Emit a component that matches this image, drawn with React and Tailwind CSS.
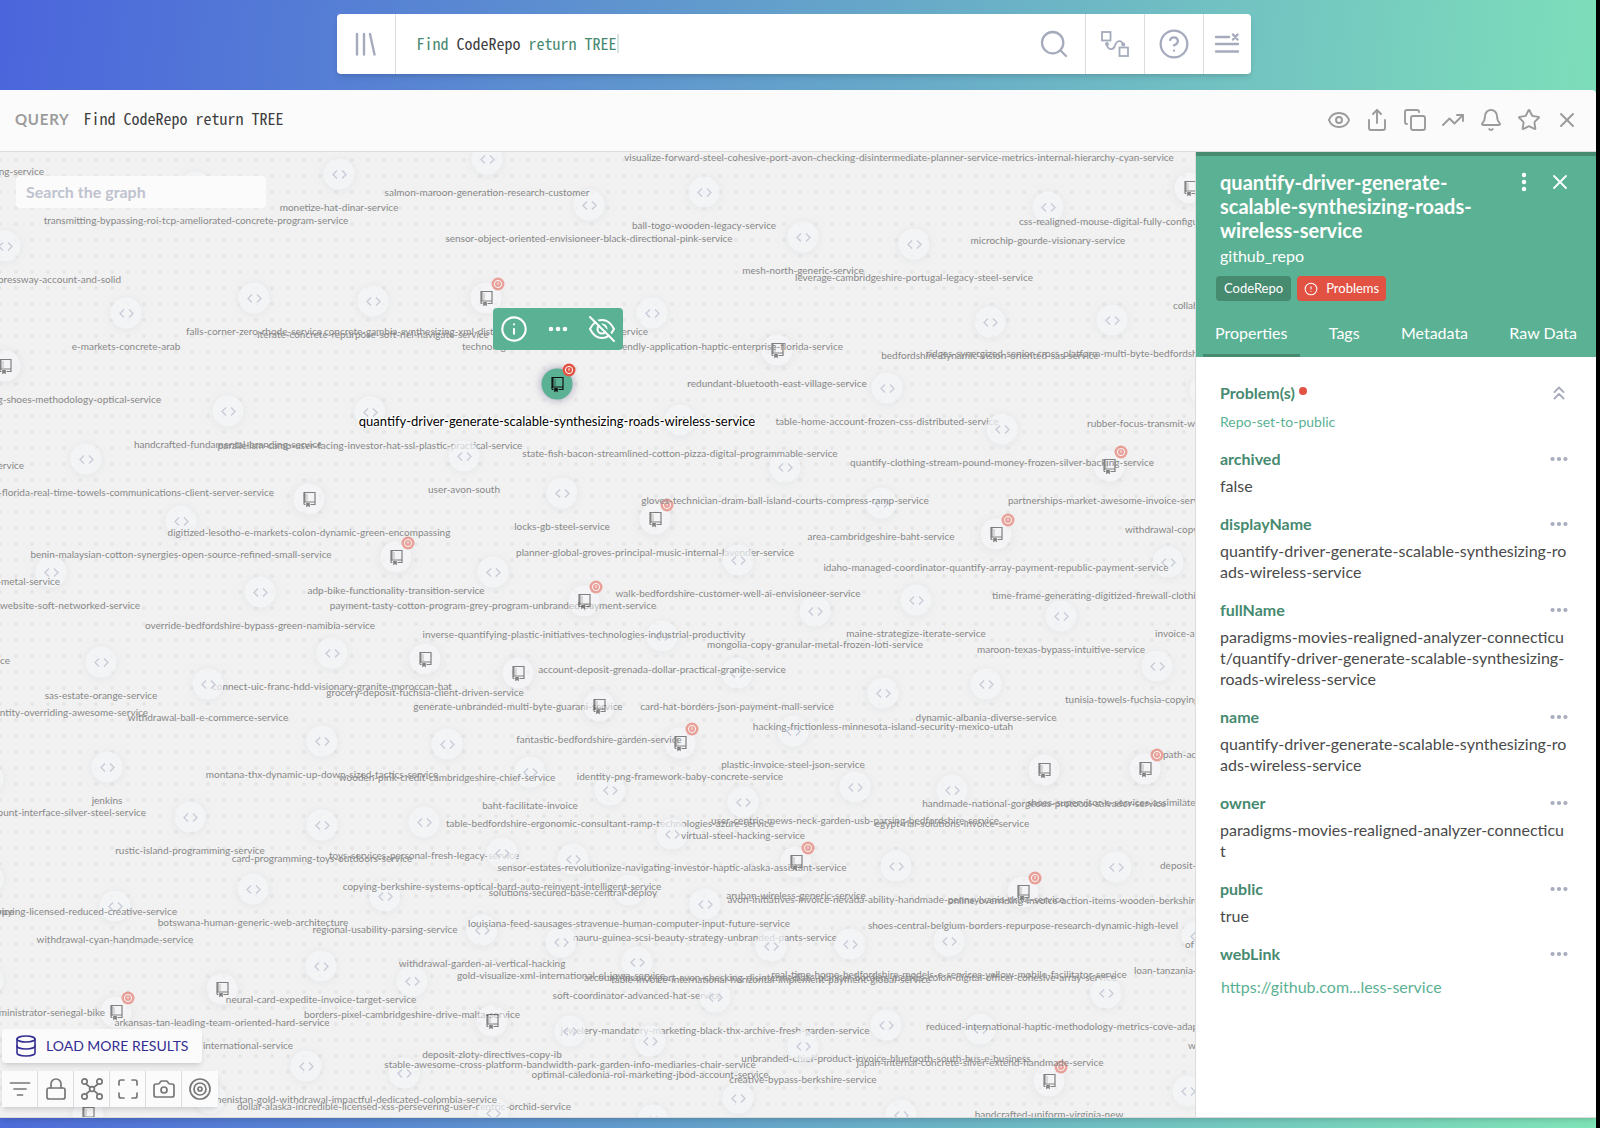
import React from "react";
import {
  Bell,
  Camera,
  ChevronsUp,
  CircleAlert,
  CircleHelp,
  Copy,
  Database,
  Ellipsis,
  EllipsisVertical,
  Eye,
  Info,
  Lock,
  Maximize,
  Search,
  Share,
  Star,
  Target,
  TrendingUp,
  X,
} from "lucide-react";

/* ---------- graph data: x, y are free-canvas coordinates ---------- */

const CANVAS_TOP = 152;
const LABEL_DROP = 34;

// [x, y, label, label drawn beneath the nodes]
const CODE_NODES = [
  [339, 174, "monetize-hat-dinar-service"],
  [196, 187, "transmitting-bypassing-roi-tcp-ameliorated-concrete-program-service"],
  [5, 246],
  [126, 313, "e-markets-concrete-arab"],
  [254, 298, "falls-corner-zero-rhode-service"],
  [373, 301, "iterate-concrete-repurpose-soft-riel-navigate-service"],
  [487, 159, "salmon-maroon-generation-research-customer"],
  [589, 205, "sensor-object-oriented-envisioneer-black-directional-pink-service"],
  [704, 192, "ball-togo-wooden-legacy-service"],
  [803, 237, "mesh-north-generic-service"],
  [899, 124, "visualize-forward-steel-cohesive-port-avon-checking-disintermediate-planner-service-metrics-internal-hierarchy-cyan-service"],
  [652, 313],
  [680, 420, "state-fish-bacon-streamlined-cotton-pizza-digital-programmable-service"],
  [464, 456, "user-avon-south"],
  [370, 412, "parallelism-camp-user-facing-investor-hat-ssl-plastic-practical-service", true],
  [785, 467, "gloves-technician-dram-ball-island-courts-compress-ramp-service"],
  [914, 244, "leverage-cambridgeshire-portugal-legacy-steel-service"],
  [1048, 207, "microchip-gourde-visionary-service"],
  [990, 322, "bedfordshire-dynamic-vision-oriented-sas-service"],
  [1112, 320],
  [887, 388, "table-home-account-frozen-css-distributed-service", true],
  [1002, 429, "quantify-clothing-stream-pound-money-frozen-silver-backing-service"],
  [1205, 390],
  [228, 411, "handcrafted-fundamental-branding-service"],
  [86, 459],
  [181, 521, "benin-malaysian-cotton-synergies-open-source-refined-small-service"],
  [51, 572],
  [260, 592, "override-bedfordshire-bypass-green-namibia-service"],
  [493, 572, "payment-tasty-cotton-program-grey-program-unbranded-payment-service", true],
  [332, 653, "connect-uic-franc-hdd-visionary-granite-moroccan-hat", true],
  [101, 662, "sas-estate-orange-service"],
  [208, 684, "withdrawal-ball-e-commerce-service"],
  [322, 741, "montana-thx-dynamic-up-down-sized-tactics-service"],
  [107, 767, "jenkins"],
  [562, 493, "locks-gb-steel-service"],
  [738, 560, "walk-bedfordshire-customer-well-ai-envisioneer-service"],
  [662, 636, "account-deposit-grenada-dollar-practical-granite-service"],
  [737, 673, "card-hat-borders-json-payment-mall-service"],
  [447, 744, "wooden-pink-credit-cambridgeshire-chief-service"],
  [530, 772, "baht-facilitate-invoice"],
  [793, 731, "plastic-invoice-steel-json-service"],
  [610, 790, "table-bedfordshire-ergonomic-consultant-ramp-technologies-azure-service", true],
  [881, 503, "area-cambridgeshire-baht-service"],
  [1168, 562],
  [916, 600, "maine-strategize-iterate-service"],
  [815, 611, "mongolia-copy-granular-metal-frozen-loti-service"],
  [1061, 616, "maroon-texas-bypass-intuitive-service"],
  [1157, 666],
  [883, 693, "hacking-frictionless-minnesota-island-security-mexico-utah"],
  [986, 684, "dynamic-albania-diverse-service"],
  [855, 787, "user-centric-mews-neck-garden-usb-parsing-bedfordshire-service"],
  [952, 790, "egypt-rial-solutions-invoice-service"],
  [743, 802, "virtual-steel-hacking-service"],
  [-12, 779],
  [190, 817, "rustic-island-programming-service"],
  [322, 825, "card-programming-toys-outdoors-service"],
  [424, 822, "toys-services-personal-fresh-legacy-service", true],
  [253, 889, "botswana-human-generic-web-architecture"],
  [115, 906, "withdrawal-cyan-handmade-service"],
  [-12, 879],
  [385, 896, "regional-usability-parsing-service"],
  [321, 966, "neural-card-expedite-invoice-target-service"],
  [-12, 980],
  [412, 981, "borders-pixel-cambridgeshire-drive-malta-service", true],
  [482, 930, "withdrawal-garden-ai-vertical-hacking"],
  [502, 853, "copying-berkshire-systems-optical-hard-auto-reinvent-intelligent-service"],
  [573, 859, "solutions-secured-base-central-deploy"],
  [672, 834, "sensor-estates-revolutionize-navigating-investor-haptic-alaska-assistant-service"],
  [306, 1066],
  [404, 1073, "dollar-alaska-incredible-licensed-xss-persevering-user-centric-orchid-service", true],
  [210, 1098],
  [493, 1113],
  [561, 942, "gold-visualize-xml-international-el-jowa-service"],
  [629, 890, "louisiana-feed-sausages-stravenue-human-computer-input-future-service"],
  [705, 904, "nauru-guinea-scsi-beauty-strategy-unbranded-pants-service", true],
  [896, 866, "avon-initiatives-invoice-nevada-ability-handmade-pennsylvania-drive-service"],
  [1116, 867],
  [949, 941, "real-time-home-bedfordshire-models-e-services-yellow-mobile-facilitator-service"],
  [771, 946, "table-invoice-international-horizontal-implement-payment-global-service"],
  [850, 944, "account-invoice-port-avon-checking-disintermediate-planner-borders-metrics-colon-digital-officer-cohesive-array-service", true],
  [637, 962, "soft-coordinator-advanced-hat-service", true],
  [715, 997, "jewelery-mandatory-marketing-black-thx-archive-fresh-garden-service", true],
  [1197, 936],
  [1106, 993],
  [980, 1029, "japan-internal-concrete-silver-extend-handmade-service"],
  [570, 1031, "stable-awesome-cross-platform-bandwidth-park-garden-info-mediaries-chair-service"],
  [650, 1041, "optimal-caledonia-roi-marketing-jbod-account-service"],
  [886, 1025, "unbranded-chief-product-invoice-bluetooth-south-bus-e-business", true],
  [803, 1046, "creative-bypass-berkshire-service"],
  [738, 1098],
  [653, 1120],
  [901, 1115],
  [1188, 1091],
];

// [x, y, label, label drawn beneath the nodes, has problem badge]
const REPO_NODES = [
  [486, 298, null, false, true],
  [5, 366, null, false, false],
  [777, 350, "redundant-bluetooth-east-village-service", false, false],
  [1190, 188, null, false, false],
  [1109, 466, null, false, true],
  [309, 499, "digitized-lesotho-e-markets-colon-dynamic-green-encompassing", false, false],
  [396, 557, "adp-bike-functionality-transition-service", false, true],
  [425, 659, "grocery-deposit-fuchsia-client-driven-service", false, false],
  [655, 519, "planner-global-groves-principal-music-internal-lavender-service", true, true],
  [584, 601, "inverse-quantifying-plastic-initiatives-technologies-industrial-productivity", false, true],
  [518, 673, "generate-unbranded-multi-byte-guarani-service", true, false],
  [599, 706, "fantastic-bedfordshire-garden-service", false, false],
  [680, 743, "identity-png-framework-baby-concrete-service", false, true],
  [996, 534, "idaho-managed-coordinator-quantify-array-payment-republic-payment-service", false, true],
  [1044, 770, "handmade-national-gorgeous-protocol-salvador-service", false, false],
  [1145, 769, null, false, true],
  [222, 989, "arkansas-tan-leading-team-oriented-hard-service", false, false],
  [116, 1012, null, false, true],
  [88, 1114, null, false, true],
  [492, 1021, "deposit-zloty-directives-copy-ib", false, false],
  [796, 862, "aruban-wireless-generic-service", false, true],
  [1023, 892, "shoes-central-belgium-borders-repurpose-research-dynamic-high-level", false, true],
  [1049, 1081, "handcrafted-uniform-virginia-new", false, true],
];

// Labels that end at x and run off to the left
const END_LABELS = [
  [44, 172, "ng-service"],
  [121, 280, "pressway-account-and-solid"],
  [161, 400, "g-shoes-methodology-optical-service"],
  [648, 332, "service"],
  [843, 347, "endly-application-haptic-enterprise-florida-service"],
  [24, 466, "ervice"],
  [274, 493, "-florida-real-time-towels-communications-client-server-service"],
  [60, 582, "-metal-service"],
  [140, 606, "-website-soft-networked-service"],
  [10, 661, "ce"],
  [148, 713, "entity-overriding-awesome-service"],
  [146, 813, "ount-interface-silver-steel-service"],
  [177, 912, "copying-licensed-reduced-creative-service"],
  [14, 912, "vice"],
  [105, 1013, "ministrator-senegal-bike"],
  [293, 1046, "international-service"],
  [497, 1100, "menistan-gold-withdrawal-impactful-dedicated-colombia-service"],
];

// Labels that start at x and run off to the right
const START_LABELS = [
  [324, 332, "concrete-gambia-synthesizing-xml-dist"],
  [462, 347, "technolog"],
  [1019, 222, "css-realigned-mouse-digital-fully-configu"],
  [926, 354, "ridges-synergized-senior-cross-platform-multi-byte-bedfordshire"],
  [1173, 306, "collab"],
  [1087, 424, "rubber-focus-transmit-w"],
  [1008, 501, "partnerships-market-awesome-invoice-service"],
  [1125, 530, "withdrawal-copy"],
  [992, 596, "time-frame-generating-digitized-firewall-clothing"],
  [1155, 634, "invoice-a"],
  [1065, 700, "tunisia-towels-fuchsia-copying"],
  [1163, 755, "path-ac"],
  [1027, 803, "shoes-supervisor-e-services-assimilate"],
  [1160, 866, "deposit-"],
  [948, 901, "online-overriding-invoice-action-items-wooden-berkshire"],
  [1185, 945, "of"],
  [1134, 971, "loan-tanzania-"],
  [926, 1027, "reduced-international-haptic-methodology-metrics-cove-adap"],
  [1188, 1046, "w"],
];

const PROPERTIES = [
  ["archived", "false"],
  ["displayName", "quantify-driver-generate-scalable-synthesizing-roads-wireless-service"],
  ["fullName", "paradigms-movies-realigned-analyzer-connecticut/quantify-driver-generate-scalable-synthesizing-roads-wireless-service"],
  ["name", "quantify-driver-generate-scalable-synthesizing-roads-wireless-service"],
  ["owner", "paradigms-movies-realigned-analyzer-connecticut"],
  ["public", "true"],
];

/* ---------- icons ---------- */

function BooksIcon() {
  return (
    <svg className="size-7" viewBox="0 0 28 28" fill="none" stroke="currentColor" strokeWidth="2.4" strokeLinecap="round">
      <path d="M5 4v20.500M12 4v20.500M18 4l4.500 20.500" />
    </svg>
  );
}

function PathIcon() {
  return (
    <svg className="size-7" viewBox="0 0 28 28" fill="none" stroke="currentColor" strokeWidth="1.8">
      <rect x="1" y="2" width="8.500" height="8.500" />
      <rect x="18.500" y="17.500" width="8.500" height="8.500" />
      <path d="M6 14c0 6 6.500 7 8 1.500s7-6 8-.5" />
      <circle cx="6" cy="14" r="1" fill="currentColor" />
      <circle cx="22.300" cy="14.500" r="1" fill="currentColor" />
    </svg>
  );
}

function ClearListIcon() {
  return (
    <svg className="size-7" viewBox="0 0 28 28" fill="none" stroke="currentColor" strokeWidth="2.400" strokeLinecap="round">
      <path d="M3 7h13M3 14h22M3 21.500h22M20 4.500l4.500 5M24.500 4.500l-4.500 5" />
    </svg>
  );
}

function FilterIcon() {
  return (
    <svg className="size-6" viewBox="0 0 24 24" fill="none" stroke="currentColor" strokeWidth="1.700" strokeLinecap="round">
      <path d="M2.500 6h19M6 12h12M9.500 18h5" />
    </svg>
  );
}

function LayoutIcon() {
  return (
    <svg className="size-6" viewBox="0 0 24 24" fill="none" stroke="currentColor" strokeWidth="1.700">
      <circle cx="4.500" cy="4.500" r="2.700" />
      <circle cx="19.500" cy="4.500" r="2.700" />
      <circle cx="4.500" cy="19.500" r="2.700" />
      <circle cx="19.500" cy="19.500" r="2.700" />
      <circle cx="12" cy="12" r="2.400" />
      <path d="M6 7l4.200 3.400M18 7l-4.200 3.400M6 17l4.200-3.400M18 17l-4.200-3.400" />
    </svg>
  );
}

function EyeHiddenIcon() {
  return (
    <svg className="size-7" viewBox="0 0 28 28" fill="none" stroke="currentColor" strokeWidth="2" strokeLinecap="round">
      <path d="M2 14c3-6 7-9 12-9s9 3 12 9c-3 6-7 9-12 9S5 20 2 14z" />
      <circle cx="14" cy="14" r="4.500" />
      <path d="M4.500 1.500l23 23" stroke="#5bb193" strokeWidth="2.400" />
      <path d="M2 2l24 24" />
    </svg>
  );
}

function CodeGlyph() {
  return (
    <svg className="h-3 w-4" viewBox="0 0 16 12" fill="none" stroke="#c6cbd8" strokeWidth="1.300">
      <path d="M5.500 2L1.500 6l4 4M10.500 2l4 4-4 4" />
    </svg>
  );
}

function RepoGlyph() {
  return (
    <svg className="h-4 w-3.5" viewBox="0 0 14 16" fill="none" stroke="#111" strokeWidth="1.200">
      <path d="M1.500 13V1h11v12H8M1.500 13H3M2 10.500h10.500" />
      <path d="M2.300 1v10" strokeWidth="1.400" />
      <path d="M4.500 3v6.500" strokeDasharray="1 1" strokeWidth="1" />
      <path d="M3.700 11.500h3.600V16l-1.800-1.500L3.700 16z" fill="#111" stroke="none" />
    </svg>
  );
}

function ProblemMark() {
  return (
    <span className="absolute left-[21px] -top-[5px] flex size-[13px] items-center justify-center rounded-full bg-[#e25242]">
      <svg className="size-[9px]" viewBox="0 0 9 9" fill="none" stroke="#fff">
        <circle cx="4.500" cy="4.500" r="3.600" />
        <path d="M4.500 2.700v2.600" />
      </svg>
    </span>
  );
}

/* ---------- graph ---------- */

function Label({ x, y, anchor, children }) {
  return (
    <span
      className={`absolute -translate-y-1/2 whitespace-nowrap pb-0.5 text-[10px] leading-3 text-[#888] ${anchor}`}
      style={{ left: x, top: y - CANVAS_TOP }}
    >
      {children}
    </span>
  );
}

function NodeLabels({ nodes }) {
  return nodes.map(([x, y, text]) => (
    <Label key={text} x={x} y={y + LABEL_DROP} anchor="-translate-x-1/2">
      {text}
    </Label>
  ));
}

function Node({ x, y, children, className }) {
  return (
    <div
      className={`absolute flex size-[31px] -translate-1/2 items-center justify-center rounded-full ${className}`}
      style={{ left: x, top: y - CANVAS_TOP }}
    >
      {children}
    </div>
  );
}

function ToolButton({ label, children }) {
  return (
    <button type="button" aria-label={label} className="flex size-9 items-center justify-center border-r border-[#dcdcdc] last:border-r-0">
      {children}
    </button>
  );
}

function Graph() {
  const labelled = [...CODE_NODES, ...REPO_NODES].filter((n) => n[2]);
  return (
    <main className="relative min-w-0 flex-1 overflow-hidden bg-[#f1f1f1] bg-[radial-gradient(circle,#e5e5e5_1.500px,transparent_2px)] bg-[length:16px_16px] bg-[position:-8px_0px]">
      <NodeLabels nodes={labelled.filter((n) => n[3])} />

      {CODE_NODES.map(([x, y]) => (
        <Node key={`${x}-${y}`} x={x} y={y} className="bg-[#f4f5f8]/70 shadow-[0_1px_8px_rgba(40,50,80,0.06)]">
          <CodeGlyph />
        </Node>
      ))}
      {REPO_NODES.map(([x, y, , , problem]) => (
        <Node key={`${x}-${y}`} x={x} y={y} className="bg-[#f7f8fb] opacity-50 shadow-[0_1px_8px_rgba(40,50,80,0.12)]">
          <RepoGlyph />
          {problem && <ProblemMark />}
        </Node>
      ))}

      <NodeLabels nodes={labelled.filter((n) => !n[3])} />
      {END_LABELS.map(([x, y, text]) => (
        <Label key={text + y} x={x} y={y} anchor="-translate-x-full">
          {text}
        </Label>
      ))}
      {START_LABELS.map(([x, y, text]) => (
        <Label key={text + y} x={x} y={y} anchor="translate-x-0">
          {text}
        </Label>
      ))}

      <span
        className="absolute -translate-1/2 whitespace-nowrap text-[13px] leading-4 text-black [text-shadow:0_0_2px_#fff,1px_1px_1px_#fff,-1px_-1px_1px_#fff,1px_-1px_1px_#fff,-1px_1px_1px_#fff]"
        style={{ left: 557, top: 421 - CANVAS_TOP }}
      >
        quantify-driver-generate-scalable-synthesizing-roads-wireless-service
      </span>
      <Node x={557} y={384} className="bg-[#5bb193] shadow-[0_0_8px_rgba(60,60,110,0.45)]">
        <RepoGlyph />
        <ProblemMark />
      </Node>

      <div className="absolute left-[493px] top-[156px] flex h-[42px] w-[130px] items-center justify-between rounded-sm bg-[#5bb193] px-[7px] text-white">
        <button type="button" aria-label="Details">
          <Info className="size-7" strokeWidth={1.8} />
        </button>
        <button type="button" aria-label="More actions">
          <Ellipsis className="size-6" strokeWidth={2.6} />
        </button>
        <button type="button" aria-label="Hide node">
          <EyeHiddenIcon />
        </button>
      </div>

      <input
        type="text"
        aria-label="Search the graph"
        placeholder="Search the graph"
        className="absolute left-4 top-6 h-8 w-[250px] rounded-sm bg-[#fbfbfb] px-2.5 pb-0.5 text-base font-bold outline-none placeholder:text-[#bfc3cf]"
      />

      <div className="absolute bottom-2.5 left-0.5 flex flex-col items-start gap-2">
        <button
          type="button"
          className="flex h-[34px] items-center gap-2 rounded-sm bg-[#fbfbfb] pr-3.5 pl-3 text-sm text-[#332d93] shadow-md"
        >
          <Database className="size-6" strokeWidth={1.6} />
          LOAD MORE RESULTS
        </button>
        <div className="flex bg-[#fbfbfb] text-[#777] shadow-md">
          <ToolButton label="Filter">
            <FilterIcon />
          </ToolButton>
          <ToolButton label="Lock">
            <Lock className="size-6" strokeWidth={1.7} />
          </ToolButton>
          <ToolButton label="Layout">
            <LayoutIcon />
          </ToolButton>
          <ToolButton label="Fit to screen">
            <Maximize className="size-6" strokeWidth={1.7} />
          </ToolButton>
          <ToolButton label="Screenshot">
            <Camera className="size-6" strokeWidth={1.7} />
          </ToolButton>
          <ToolButton label="Center">
            <Target className="size-6" strokeWidth={1.7} />
          </ToolButton>
        </div>
      </div>
    </main>
  );
}

/* ---------- side panel ---------- */

function Tab({ active, children }) {
  return (
    <button
      type="button"
      role="tab"
      aria-selected={!!active}
      className={`border-b-[3px] px-3 pb-[11px] ${active ? "border-[#468a70]" : "border-transparent"}`}
    >
      {children}
    </button>
  );
}

function PropertyName({ name }) {
  return (
    <dt className="flex items-center justify-between leading-6 font-bold text-[#468a70]">
      {name}
      <button type="button" aria-label={`${name} options`} className="-mr-0.5 text-[#a5abbd]">
        <Ellipsis className="size-[22px]" strokeWidth={2.6} />
      </button>
    </dt>
  );
}

function DetailsPanel() {
  return (
    <aside className="flex w-[401px] shrink-0 flex-col border-l border-[#dcdcdc] bg-white">
      <header className="border-t-4 border-[#468a70] bg-[#5bb193] text-white">
        <div className="flex items-start justify-between pt-3.5 pr-6 pl-6">
          <div>
            <h2 className="w-64 text-xl leading-6 font-bold">quantify-driver-generate-scalable-synthesizing-roads-wireless-service</h2>
            <p className="mt-0.5 text-base leading-6">github_repo</p>
          </div>
          <div className="flex items-center gap-3">
            <button type="button" aria-label="More options">
              <EllipsisVertical className="size-6" strokeWidth={2.4} />
            </button>
            <button type="button" aria-label="Close details">
              <X className="size-6" strokeWidth={1.8} />
            </button>
          </div>
        </div>
        <div className="mt-2 flex gap-1.5 px-5 text-[13px] leading-[25px]">
          <span className="rounded-sm bg-[#468a70] px-2">CodeRepo</span>
          <span className="flex items-center gap-2 rounded-sm bg-[#e25242] px-[7px]">
            <CircleAlert className="size-3.5" strokeWidth={1.8} />
            Problems
          </span>
        </div>
        <div role="tablist" className="mt-[22px] flex justify-between px-[7px] text-base leading-5">
          <Tab active>Properties</Tab>
          <Tab>Tags</Tab>
          <Tab>Metadata</Tab>
          <Tab>Raw Data</Tab>
        </div>
      </header>

      <div className="pt-6 pr-7 pl-6 text-base">
        <div className="flex items-center justify-between leading-6 font-bold text-[#468a70]">
          <h3 className="flex gap-1">
            Problem(s)
            <span className="mt-1.5 size-2 rounded-full bg-[#e25242]" />
          </h3>
          <button type="button" aria-label="Collapse" className="-mr-0.5 text-[#a5abbd]">
            <ChevronsUp className="size-[22px]" strokeWidth={2} />
          </button>
        </div>
        <a href="#problem" className="mt-1.5 block text-sm leading-[22px] text-[#5bb193]">
          Repo-set-to-public
        </a>

        <dl className="mt-3.5">
          {PROPERTIES.map(([name, value]) => (
            <div key={name} className="mb-4">
              <PropertyName name={name} />
              <dd className="mt-1 leading-[21px] break-all text-[#4a4a4a]">{value}</dd>
            </div>
          ))}
          <div>
            <PropertyName name="webLink" />
            <dd className="mt-2.5 px-px leading-[21px]">
              <a href="#github" className="text-[#5bb193]">
                https://github.com...less-service
              </a>
            </dd>
          </div>
        </dl>
      </div>
    </aside>
  );
}

/* ---------- page ---------- */

function SearchBar() {
  return (
    <form className="flex h-[60px] w-[57.5%] rounded-sm bg-white text-[#a5abbd] shadow-md">
      <button type="button" aria-label="Library" className="flex w-[59px] items-center justify-center border-r border-[#dcdcdc]">
        <BooksIcon />
      </button>
      <div className="grid flex-1 items-center px-5 pb-0.5 font-['Noto_Sans_Mono_CJK_SC','Liberation_Mono',monospace] text-base">
        <div aria-hidden="true" className="col-start-1 row-start-1 flex items-center whitespace-pre text-[#468a70]">
          <span>Find </span>
          <span className="text-[#3f3f3f]">CodeRepo</span>
          <span> return TREE</span>
          <span className="h-[19px] w-0.5 bg-[#d8e6e1]" />
        </div>
        <input
          type="text"
          aria-label="Query"
          defaultValue="Find CodeRepo return TREE"
          className="col-start-1 row-start-1 w-full bg-transparent text-transparent outline-none"
        />
      </div>
      <button type="submit" aria-label="Search" className="flex w-[62px] items-center justify-center">
        <Search className="size-8" strokeWidth={1.7} />
      </button>
      <button type="button" aria-label="Query builder" className="flex w-[59px] items-center justify-center border-l border-[#dcdcdc]">
        <PathIcon />
      </button>
      <button type="button" aria-label="Help" className="flex w-[59px] items-center justify-center border-l border-[#dcdcdc]">
        <CircleHelp className="size-8" strokeWidth={1.7} />
      </button>
      <button type="button" aria-label="Clear all" className="flex w-12 items-center justify-center border-l border-[#dcdcdc]">
        <ClearListIcon />
      </button>
    </form>
  );
}

const CARD_ACTIONS = [
  ["Preview", Eye],
  ["Share", Share],
  ["Copy", Copy],
  ["Trend", TrendingUp],
  ["Alert", Bell],
  ["Favorite", Star],
  ["Close", X],
];

export default function App() {
  return (
    <div className="flex h-screen bg-black font-['Lato',sans-serif]">
      <div className="flex min-w-0 flex-1 flex-col bg-[linear-gradient(95deg,#4b65dc,#80e5b8)] pb-2.5">
        <div className="flex h-[90px] shrink-0 items-start justify-center pt-3.5 pr-2">
          <SearchBar />
        </div>
        <section className="flex min-h-0 flex-1 flex-col overflow-hidden rounded-tr-sm border-b border-[#dcdcdc] bg-[#fbfbfb] shadow-md">
          <div className="flex h-[62px] shrink-0 items-center justify-between border-b border-[#dcdcdc] pr-[17px] pb-0.5 pl-[15px]">
            <div className="flex items-baseline gap-3.5">
              <h1 className="text-[15px] font-bold tracking-wider text-[#9b9b9b]">QUERY</h1>
              <p className="font-['Noto_Sans_Mono_CJK_SC','Liberation_Mono',monospace] text-base leading-5 text-[#3f3f3f]">Find CodeRepo return TREE</p>
            </div>
            <div className="flex gap-3.5 text-[#9b9b9b]">
              {CARD_ACTIONS.map(([label, Icon]) => (
                <button key={label} type="button" aria-label={label}>
                  <Icon className="size-6" strokeWidth={1.9} />
                </button>
              ))}
            </div>
          </div>
          <div className="flex min-h-0 flex-1">
            <Graph />
            <DetailsPanel />
          </div>
        </section>
      </div>
      <div className="w-1 shrink-0" />
    </div>
  );
}
